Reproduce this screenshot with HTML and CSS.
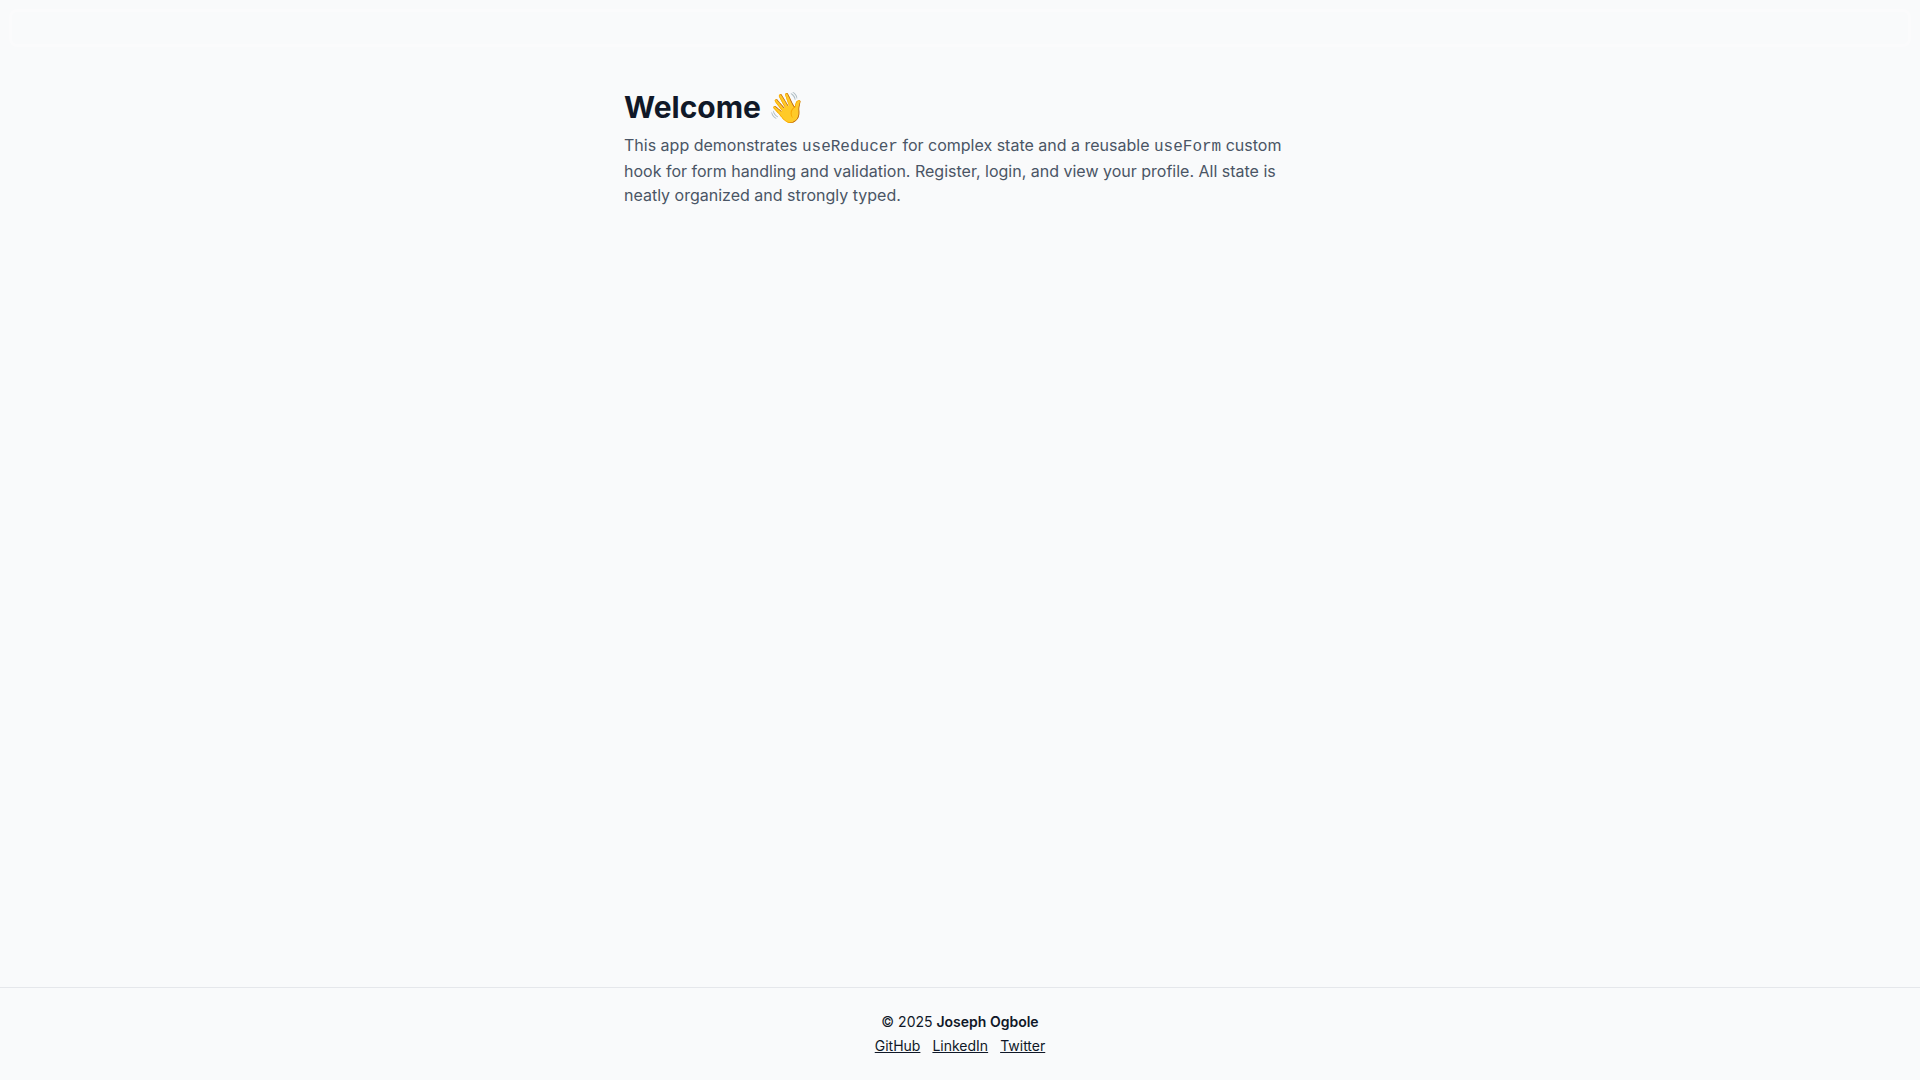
FILE: index.html
```
<!DOCTYPE html>
<html lang="en">
<head>
    <meta charset="UTF-8">
    <meta name="viewport" content="width=device-width, initial-scale=1.0">
    <title>Welcome</title>
    <link rel="stylesheet" href="styles.css">
</head>
<body>
    <header class="header"></header>

    <main class="content">
        <h1>Welcome 👋</h1>
        <p>
            This app demonstrates <code>useReducer</code> for complex state and a reusable
            <code>useForm</code> custom hook for form handling and validation. Register, login,
            and view your profile. All state is neatly organized and strongly typed.
        </p>
    </main>

    <footer class="footer">
        <p>© 2025 <strong>Joseph Ogbole</strong></p>
        <nav class="footer-links">
            <a href="#">GitHub</a>
            <a href="#">LinkedIn</a>
            <a href="#">Twitter</a>
        </nav>
    </footer>
</body>
</html>
```

FILE: styles.css
```
* {
    box-sizing: border-box;
}

body {
    font-family: Inter, sans-serif;
    font-size: 16px;
    line-height: 24px;
    background-color: #f9fafb;
    color: #101828;
    margin: 0;
    min-height: 100vh;
    display: flex;
    flex-direction: column;
}

h1,
p {
    margin: 0;
}

/* empty bar, barely lighter than the page */
.header {
    height: 38px;
    margin: 9px 9px 0;
    border: 3px solid rgba(255, 255, 255, 0.3);
    border-radius: 8px;
}

.content {
    flex: 1;
    width: 100%;
    max-width: 672px;
    margin: 0 auto;
    padding-top: 42px;
}

.content h1 {
    font-size: 30px;
    line-height: 36px;
    font-weight: 700;
    margin-bottom: 8px;
}

.content p {
    color: #4a5565;
}

code {
    font-family: "Liberation Mono", monospace;
    font-size: 16px;
}

.footer {
    border-top: 1px solid #e5e7eb;
    padding: 24px;
    font-size: 14px;
    line-height: 20px;
    text-align: center;
}

.footer strong {
    font-weight: 600;
}

.footer-links {
    display: flex;
    justify-content: center;
    gap: 12px;
    margin-top: 4px;
}

.footer-links a {
    color: inherit;
}
```
